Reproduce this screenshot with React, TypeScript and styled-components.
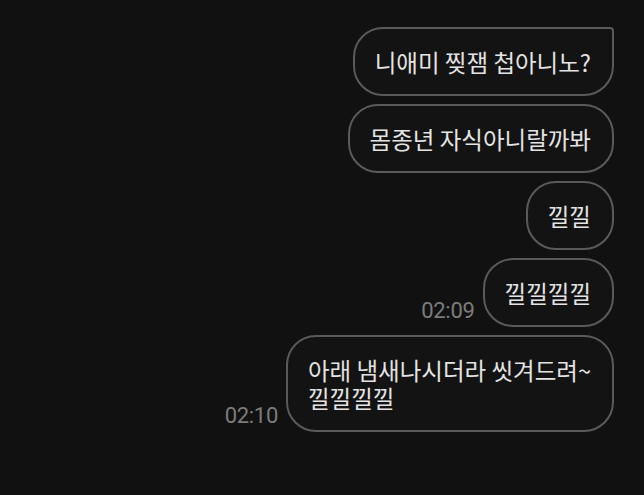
import React from "react";
import styled, { createGlobalStyle } from "styled-components";

const Global = createGlobalStyle`
  html, body { margin: 0; padding: 0; background: #111111; }
  body { width: 644px; height: 495px; overflow: hidden; }
`;

const Screen = styled.div`
  width: 644px;
  height: 495px;
  background: #111111;
  box-sizing: border-box;
  padding: 27px 30px 0 0;
  display: flex;
  flex-direction: column;
  align-items: flex-end;
  gap: 8px;
  font-family: "Noto Sans CJK KR", "Noto Sans", sans-serif;
`;

const Row = styled.div`
  display: flex;
  align-items: flex-end;
  gap: 8px;
`;

const Time = styled.span`
  font-family: Roboto, "Noto Sans", sans-serif;
  font-size: 22px;
  color: #7c7c7c;
  line-height: 1;
  margin-bottom: 5px;
  letter-spacing: -0.3px;
`;

const Bubble = styled.div<{ $first?: boolean }>`
  box-sizing: border-box;
  border: 2px solid #5a5a5a;
  border-radius: ${(p) => (p.$first ? "30px 4px 30px 30px" : "30px")};
  background: #131313;
  color: #e4e4e4;
  font-size: 23.5px;
  line-height: 28px;
  padding: 19px 21px 18px 20px;
  white-space: nowrap;
`;

const Line = styled.span`
  display: block;
`;

export default function App() {
  return (
    <>
      <Global />
      <Screen>
        <Row>
          <Bubble $first>니애미 찢잼 첩아니노?</Bubble>
        </Row>
        <Row>
          <Bubble>몸종년 자식아니랄까봐</Bubble>
        </Row>
        <Row>
          <Bubble>낄낄</Bubble>
        </Row>
        <Row>
          <Time>02:09</Time>
          <Bubble>낄낄낄낄</Bubble>
        </Row>
        <Row>
          <Time>02:10</Time>
          <Bubble>
            <Line>아래 냄새나시더라 씻겨드려~</Line>
            <Line>낄낄낄낄</Line>
          </Bubble>
        </Row>
      </Screen>
    </>
  );
}
